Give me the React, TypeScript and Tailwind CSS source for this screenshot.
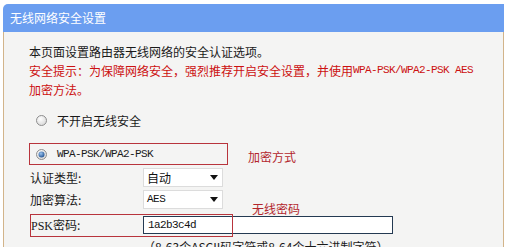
import React from 'react'

const cjk = { fontFamily: '"Noto Sans CJK SC", "Noto Sans", sans-serif' }
const mono = { fontFamily: '"Liberation Mono", "Noto Sans CJK SC", monospace' }

function Radio({ checked }: { checked?: boolean }) {
    return (
        <svg width="11" height="11" viewBox="0 0 11 11" className="shrink-0">
            <defs>
                <radialGradient id={checked ? 'rc' : 'ru'} cx="40%" cy="35%" r="70%">
                    <stop offset="0%" stopColor="#ffffff" />
                    <stop offset="100%" stopColor="#d6d6d6" />
                </radialGradient>
                <radialGradient id="dot" cx="40%" cy="35%" r="70%">
                    <stop offset="0%" stopColor="#9cc4f0" />
                    <stop offset="100%" stopColor="#1d4f8f" />
                </radialGradient>
            </defs>
            <circle cx="5.5" cy="5.5" r="5" fill={`url(#${checked ? 'rc' : 'ru'})`} stroke="#8e8e8e" strokeWidth="1" />
            {checked && <circle cx="5.5" cy="5.5" r="3" fill="url(#dot)" />}
        </svg>
    )
}

function Select({ value, monoText }: { value: string, monoText?: boolean }) {
    return (
        <div className="w-[80px] h-[19px] bg-white border border-[#dcdcdc] flex items-center pl-[3px] pr-[3px]">
            <span className={monoText ? 'text-[11px] leading-none tracking-[-0.5px] text-[#111]' : 'text-[12px] leading-none text-[#111]'} style={monoText ? mono : cjk}>{value}</span>
            {/* little down arrow */}
            <svg width="8" height="5" viewBox="0 0 8 5" className="ml-auto mr-[1px]">
                <path d="M0 0 H8 L4 5 Z" fill="#111" />
            </svg>
        </div>
    )
}

export default function App() {
    return (
        <div className="w-[509px] h-[247px] bg-white overflow-hidden pt-[4px] pl-[3px]">
            <div className="w-[501px]">
                {/* Header */}
                <div className="h-[28px] bg-[#6b9ef0] rounded-tl-[5px] flex items-center pl-[7px]">
                    <span className="text-[12px] text-white" style={cjk}>无线网络安全设置</span>
                </div>

                {/* Body */}
                <div className="h-[220px] bg-[#f4f4f3] border-l border-r border-[#d2b48a] pl-[25px] pt-[10px] text-[12px] leading-[19px] text-[#1a1a1a]" style={cjk}>
                    <div className="h-[19px]">本页面设置路由器无线网络的安全认证选项。</div>
                    <div className="h-[19px] flex items-center text-[#cc1010]">
                        <span>安全提示：为保障网络安全，强烈推荐开启安全设置，并使用</span>
                        <span className="text-[11px] leading-none tracking-[-0.6px]" style={mono}>WPA-PSK/WPA2-PSK AES</span>
                    </div>
                    <div className="h-[19px] text-[#cc1010]">加密方法。</div>

                    {/* Radio: off */}
                    <div className="mt-[11px] h-[20px] flex items-center pl-[7px] gap-[10px]">
                        <Radio />
                        <span>不开启无线安全</span>
                    </div>

                    {/* Radio: WPA */}
                    <div className="mt-[13px] h-[22px] flex items-center">
                        <div className="w-[199px] h-[22px] border border-[#b8343c] flex items-center pl-[6px] gap-[10px]">
                            <Radio checked />
                            <span className="text-[11px] leading-none tracking-[-0.6px]" style={mono}>WPA-PSK/WPA2-PSK</span>
                        </div>
                        <span className="ml-[20px] mt-[4px] text-[#b3262c]">加密方式</span>
                    </div>

                    {/* Form rows */}
                    <div className="mt-[3px] h-[19px] flex items-center">
                        <span className="w-[114px] pl-[1px]">认证类型:</span>
                        <Select value="自动" />
                    </div>
                    <div className="mt-[3px] h-[19px] flex items-center">
                        <span className="w-[114px] pl-[1px]">加密算法:</span>
                        <Select value="AES" monoText />
                    </div>
                    <div className="relative mt-[7px] h-[18px] flex items-center">
                        <span className="w-[114px] pl-[2px]"><span style={{ fontFamily: '"Liberation Serif", serif' }}>PSK</span>密码:</span>
                        <div className="w-[250px] h-[18px] bg-white border border-[#243a52] flex items-center pl-[4px]">
                            <span className="text-[11px] leading-none tracking-[-0.6px] text-[#111]" style={mono}>1a2b3c4d</span>
                        </div>
                        {/* annotation box */}
                        <div className="absolute left-[1px] top-[-2px] w-[203px] h-[23px] border border-[#b8343c] pointer-events-none" />
                        {/* annotation label */}
                        <span className="absolute left-[223px] top-[-17px] text-[#b3262c]">无线密码</span>
                    </div>
                    <div className="pl-[114px] mt-[3px] h-[19px]">（8-63个ASCII码字符或8-64个十六进制字符）</div>
                </div>
            </div>
        </div>
    )
}
